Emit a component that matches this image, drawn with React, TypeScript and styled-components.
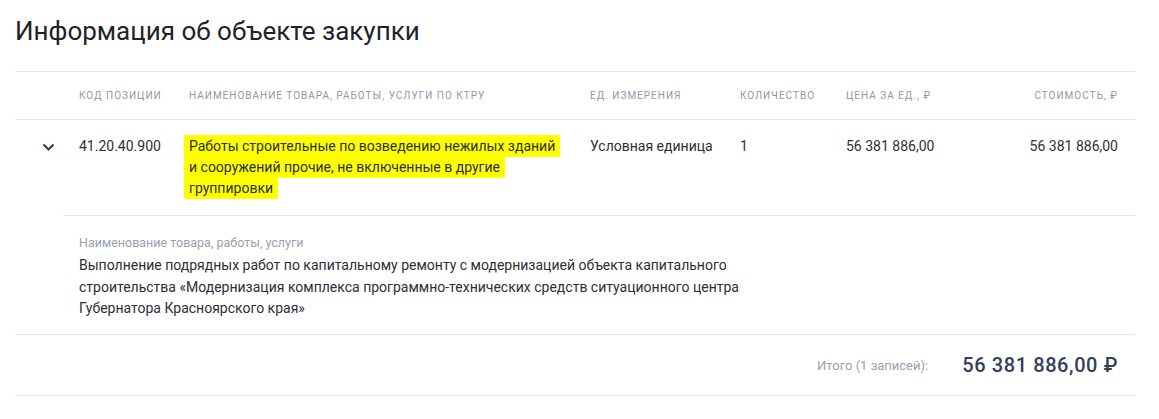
import styled, { createGlobalStyle } from 'styled-components'

const GlobalStyle = createGlobalStyle`
  body {
    margin: 0;
    background: #fff;
    font-family: Roboto, 'Noto Sans', sans-serif;
    color: #2b2f38;
  }
`

const Section = styled.section`
  padding: 16px 24px 0 15px;
`

const Title = styled.h2`
  margin: 0 0 25px;
  font-size: 26px;
  font-weight: 400;
  line-height: 30px;
  color: #1f2329;
`

const Table = styled.div`
  border-top: 1px solid #e4e7eb;
  display: grid;
  grid-template-columns: 64px 110px 401px 150px 106px 1fr 1fr;
`

const HeadCell = styled.div<{ $right?: boolean }>`
  height: 47px;
  display: flex;
  align-items: center;
  justify-content: ${(p) => (p.$right ? 'flex-end' : 'flex-start')};
  padding-right: ${(p) => (p.$right ? '17px' : '0')};
  border-bottom: 1px solid #e4e7eb;
  font-size: 10px;
  letter-spacing: 1px;
  text-transform: uppercase;
  color: #8f97a6;
`

const Cell = styled.div<{ $right?: boolean }>`
  padding: 16px ${(p) => (p.$right ? '17px' : '0')} 16px 0;
  font-size: 14px;
  line-height: 21px;
  text-align: ${(p) => (p.$right ? 'right' : 'left')};
`

const NameCell = styled(Cell)`
  padding-right: 26px;
`

const ToggleCell = styled.div`
  display: flex;
  justify-content: center;
  padding-top: 23px;
  padding-left: 2px;
`

const Mark = styled.span`
  background: #ffff00;
  padding: 3px 5px;
  margin-left: -5px;
  -webkit-box-decoration-break: clone;
  box-decoration-break: clone;
`

const Details = styled.div`
  grid-column: 2 / -1;
  margin-left: -16px;
  padding: 18px 0 14px 16px;
  border-top: 1px solid #e4e7eb;
`

const DetailLabel = styled.div`
  font-size: 12.5px;
  line-height: 18px;
  color: #9aa1ae;
  margin-bottom: 3px;
`

const DetailText = styled.div`
  max-width: 690px;
  font-size: 14px;
  line-height: 21.5px;
`

const TotalRow = styled.div`
  grid-column: 1 / -1;
  height: 60px;
  display: flex;
  align-items: center;
  justify-content: flex-end;
  gap: 34px;
  padding-right: 17px;
  border-top: 1px solid #e4e7eb;
  border-bottom: 1px solid #e4e7eb;
`

const TotalLabel = styled.span`
  font-size: 13px;
  color: #9aa1ae;
  padding-top: 2px;
`

const TotalValue = styled.span`
  font-size: 20px;
  font-weight: 500;
  letter-spacing: 0.6px;
  color: #334059;
`

const Chevron = () => (
  <svg width="13" height="9" viewBox="0 0 13 9" fill="none">
    <path d="M1.5 1.5 L6.5 6.5 L11.5 1.5" stroke="#334059" strokeWidth="2.2" />
  </svg>
)

export default function App() {
  return (
    <>
      <GlobalStyle />
      <Section>
        <Title>Информация об объекте закупки</Title>
        <Table>
          <HeadCell />
          <HeadCell>Код позиции</HeadCell>
          <HeadCell>Наименование товара, работы, услуги по КТРУ</HeadCell>
          <HeadCell>Ед. измерения</HeadCell>
          <HeadCell>Количество</HeadCell>
          <HeadCell>Цена за ед., ₽</HeadCell>
          <HeadCell $right>Стоимость, ₽</HeadCell>

          <ToggleCell>
            <Chevron />
          </ToggleCell>
          <Cell>41.20.40.900</Cell>
          <NameCell>
            <Mark>
              Работы строительные по возведению нежилых зданий и сооружений прочие, не включенные в
              другие группировки
            </Mark>
          </NameCell>
          <Cell>Условная единица</Cell>
          <Cell>1</Cell>
          <Cell>56 381 886,00</Cell>
          <Cell $right>56 381 886,00</Cell>

          <Details>
            <DetailLabel>Наименование товара, работы, услуги</DetailLabel>
            <DetailText>
              Выполнение подрядных работ по капитальному ремонту с модернизацией объекта
              капитального строительства «Модернизация комплекса программно-технических средств
              ситуационного центра Губернатора Красноярского края»
            </DetailText>
          </Details>

          <TotalRow>
            <TotalLabel>Итого (1 записей):</TotalLabel>
            <TotalValue>56 381 886,00 ₽</TotalValue>
          </TotalRow>
        </Table>
      </Section>
    </>
  )
}
